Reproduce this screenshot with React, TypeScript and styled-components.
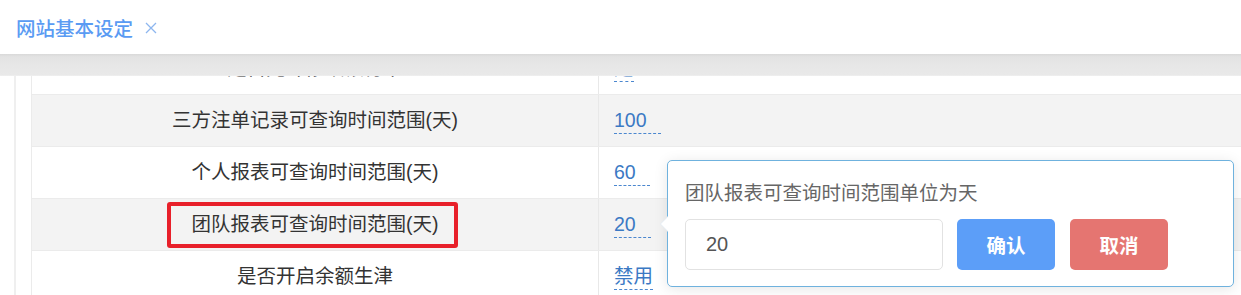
import React from "react";
import styled, { createGlobalStyle } from "styled-components";

const Global = createGlobalStyle`
  html, body { margin: 0; padding: 0; background: #fff; }
  body {
    width: 1241px;
    height: 295px;
    overflow: hidden;
    font-family: "Liberation Sans", "Noto Sans CJK SC", sans-serif;
  }
  * { box-sizing: border-box; }
`;

const FONT = `"Liberation Sans", "Noto Sans CJK SC", sans-serif`;

const Page = styled.div`
  width: 1241px;
  height: 295px;
  display: flex;
  flex-direction: column;
  overflow: hidden;
  background: #fff;
`;

const Header = styled.div`
  height: 54px;
  flex: none;
  display: flex;
  align-items: center;
  padding-left: 16px;
  gap: 12px;
  background: #fff;
`;

const TabTitle = styled.span`
  font-family: ${FONT};
  font-size: 19.5px;
  font-weight: 500;
  color: #5a9bf3;
`;

const TabClose = styled.span`
  display: inline-flex;
  width: 12px;
  height: 12px;
  margin-top: 1px;
`;

const ShadowBar = styled.div`
  height: 22px;
  flex: none;
  background: linear-gradient(#d9d9d9 0px, #e3e3e3 3px, #e7e7e7 12px, #e9e9e9 21px, #f2f2f2 22px);
`;

const Viewport = styled.div`
  flex: 1;
  min-height: 0;
  overflow: hidden;
  padding-left: 14px;
  display: flex;
`;

const Panel = styled.div`
  flex: 1;
  display: flex;
  flex-direction: column;
  border-left: 2px solid #efefef;
  padding-left: 15px;
`;

const Table = styled.div`
  margin-top: -33px;
  border-left: 1px solid #ebebeb;
  display: flex;
  flex-direction: column;
  flex: none;
`;

const Row = styled.div<{ $shade?: boolean }>`
  display: grid;
  grid-template-columns: 567px 1fr;
  height: 52px;
  border-bottom: 1px solid #ebebeb;
  background: ${(p) => (p.$shade ? "#f3f3f3" : "#fff")};
`;

const LabelCell = styled.div`
  display: flex;
  align-items: center;
  justify-content: center;
  border-right: 1px solid #e8e8e8;
  font-family: ${FONT};
  font-size: 19.5px;
  color: #333;
  padding-top: 1px;
`;

const Label = styled.span<{ $highlight?: boolean }>`
  display: inline-block;
  line-height: 1.3;
  ${(p) =>
    p.$highlight
      ? `
    border: 4px solid #e8202a;
    border-radius: 3px;
    padding: 6px 15px 6px 21px;
    margin-left: -6px;
  `
      : ""}
`;

const ValueCell = styled.div`
  position: relative;
  display: flex;
  align-items: center;
  padding-left: 15px;
`;

const EditLink = styled.span<{ $trail?: number }>`
  display: inline-block;
  font-family: ${FONT};
  font-size: 19.5px;
  line-height: 1.1;
  color: #3b79c4;
  border-bottom: 1px dashed #4b87cf;
  padding-bottom: 2px;
  padding-right: ${(p) => p.$trail ?? 0}px;
  margin-top: 3px;
`;

const Popover = styled.div`
  position: absolute;
  left: 68px;
  top: -39px;
  width: 567px;
  height: 127px;
  background: #fff;
  border: 1px solid #6fb2de;
  border-radius: 5px;
  box-shadow: 0 2px 14px rgba(0, 0, 0, 0.1);
  padding: 19px 18px 17px 17px;
  display: flex;
  flex-direction: column;
  gap: 13px;
  z-index: 2;

  &::before,
  &::after {
    content: "";
    position: absolute;
    top: 55px;
    border-style: solid;
    border-color: transparent;
  }
  &::before {
    left: -8px;
    border-width: 8px 8px 8px 0;
    border-right-color: #e6eef5;
  }
  &::after {
    left: -7px;
    border-width: 8px 8px 8px 0;
    border-right-color: #fff;
  }
`;

const PopTitle = styled.div`
  font-family: ${FONT};
  font-size: 19.5px;
  line-height: 26px;
  color: #666;
`;

const PopRow = styled.div`
  display: flex;
  align-items: center;
  gap: 14px;
`;

const Input = styled.input`
  width: 258px;
  height: 51px;
  border: 1px solid #e2e2e2;
  border-radius: 5px;
  padding: 0 0 0 20px;
  font-family: ${FONT};
  font-size: 20px;
  color: #555;
  outline: none;
  background: #fff;
`;

const Button = styled.button<{ $tone: "primary" | "danger" }>`
  width: 98px;
  height: 51px;
  border: none;
  border-radius: 5px;
  background: ${(p) => (p.$tone === "primary" ? "#5c9ef8" : "#e57571")};
  color: #fff;
  font-family: ${FONT};
  font-size: 19.5px;
  font-weight: bold;
  cursor: pointer;
  & + & {
    margin-left: 1px;
  }
`;

const rows = [
  { label: "是否允许修改银行卡", value: "是", trail: 0 },
  { label: "三方注单记录可查询时间范围(天)", value: "100", trail: 14 },
  { label: "个人报表可查询时间范围(天)", value: "60", trail: 14 },
  { label: "团队报表可查询时间范围(天)", value: "20", trail: 15, highlight: true, popover: true },
  { label: "是否开启余额生津", value: "禁用", trail: 0 },
];

export default function App() {
  return (
    <>
      <Global />
      <Page>
        <Header>
          <TabTitle>网站基本设定</TabTitle>
          <TabClose>
            <svg width="12" height="12" viewBox="0 0 12 12">
              <path d="M1 1L11 11M11 1L1 11" stroke="#8db6ef" strokeWidth="1.3" fill="none" />
            </svg>
          </TabClose>
        </Header>
        <ShadowBar />
        <Viewport>
          <Panel>
            <Table>
              {rows.map((r, i) => (
                <Row key={r.label} $shade={i % 2 === 1}>
                  <LabelCell>
                    <Label $highlight={r.highlight}>{r.label}</Label>
                  </LabelCell>
                  <ValueCell>
                    <EditLink $trail={r.trail}>{r.value}</EditLink>
                    {r.popover && (
                      <Popover>
                        <PopTitle>团队报表可查询时间范围单位为天</PopTitle>
                        <PopRow>
                          <Input defaultValue="20" />
                          <Button $tone="primary">确认</Button>
                          <Button $tone="danger">取消</Button>
                        </PopRow>
                      </Popover>
                    )}
                  </ValueCell>
                </Row>
              ))}
            </Table>
          </Panel>
        </Viewport>
      </Page>
    </>
  );
}
